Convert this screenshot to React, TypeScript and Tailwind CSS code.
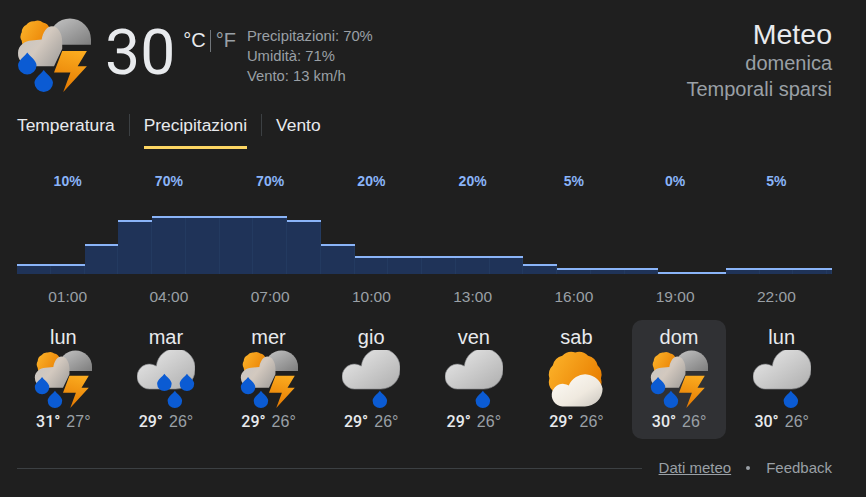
import type { ReactNode } from 'react'

const ORE = [
  { perc: '10%', ora: '01:00' },
  { perc: '70%', ora: '04:00' },
  { perc: '70%', ora: '07:00' },
  { perc: '20%', ora: '10:00' },
  { perc: '20%', ora: '13:00' },
  { perc: '5%', ora: '16:00' },
  { perc: '0%', ora: '19:00' },
  { perc: '5%', ora: '22:00' },
]

// altezza in px di ogni barra, una per ora (l'ultima e' tagliata dal bordo)
const BARRE = [10, 10, 30, 54, 58, 58, 58, 58, 54, 30, 18, 18, 18, 18, 18, 10, 6, 6, 6, 2, 2, 6, 6, 6, 6]

type Tipo = 'temporale' | 'pioggia' | 'goccia' | 'sole'

const GIORNI: { nome: string; tipo: Tipo; max: string; min: string; attivo?: boolean }[] = [
  { nome: 'lun', tipo: 'temporale', max: '31°', min: '27°' },
  { nome: 'mar', tipo: 'pioggia', max: '29°', min: '26°' },
  { nome: 'mer', tipo: 'temporale', max: '29°', min: '26°' },
  { nome: 'gio', tipo: 'goccia', max: '29°', min: '26°' },
  { nome: 'ven', tipo: 'goccia', max: '29°', min: '26°' },
  { nome: 'sab', tipo: 'sole', max: '29°', min: '26°' },
  { nome: 'dom', tipo: 'temporale', max: '30°', min: '26°', attivo: true },
  { nome: 'lun', tipo: 'goccia', max: '30°', min: '26°' },
]

// contorno a festoni del sole
function festoni(cx: number, cy: number, r: number, n: number) {
  let d = ''
  for (let i = 0; i <= n; i++) {
    const a = (i / n) * Math.PI * 2
    const x = (cx + r * Math.cos(a)).toFixed(2)
    const y = (cy + r * Math.sin(a)).toFixed(2)
    const arco = ((r * Math.PI) / n) * 1.9
    d += i === 0 ? `M${x} ${y}` : ` A${arco.toFixed(2)} ${arco.toFixed(2)} 0 0 1 ${x} ${y}`
  }
  return d + 'Z'
}

// y = centro della parte tonda, raggio 9
const Goccia = ({ x, y }: { x: number; y: number }) => (
  <path
    transform={`translate(${x} ${y})`}
    d="M0 -12.5 C2 -9 9 -5 9 0 A9 9 0 0 1 -9 0 C-9 -5 -2 -9 0 -12.5Z"
    fill="#0b5bd3"
  />
)

function IconaTemporale({ size }: { size: number }) {
  return (
    <svg width={size} height={size} viewBox="0 0 72 72">
      <path d="M31 26 L31 21 A20.5 20.5 0 0 1 72 21 L72 26Z" fill="url(#nuvolaScura)" />
      <path d={festoni(19, 18, 15, 11)} fill="url(#sole)" />
      <path
        d="M13 47 A12.5 12.5 0 0 1 1 34 C1 27 8 22 14 22 L24 21 C25 14 29 8 34 8 C40 8 44 15 44 23 L44 30 L36 47Z"
        fill="url(#nuvolaChiara)"
      />
      <path d="M44 32 L68 32 L59 47 L68 47 L45 72 L52 53 L36 53Z" fill="url(#fulmine)" />
      <Goccia x={10} y={46} />
      <Goccia x={26} y={63} />
    </svg>
  )
}

function IconaPioggia({ size, gocce }: { size: number; gocce: 1 | 3 }) {
  return (
    <svg width={size} height={size} viewBox="0 0 72 72">
      <path
        d="M15.5 48.5 A15.5 15.5 0 1 1 24 20 A24 24 0 0 1 72 24.5 A24 24 0 0 1 48 48.5Z"
        fill="url(#nuvolaGrigia)"
        stroke="#85878a"
        strokeWidth="0.8"
      />
      {gocce === 3 && (
        <>
          <Goccia x={34} y={42} />
          <Goccia x={62} y={42} />
        </>
      )}
      <Goccia x={47} y={63} />
    </svg>
  )
}

function IconaSole({ size }: { size: number }) {
  return (
    <svg width={size} height={size} viewBox="0 0 72 72">
      <path d={festoni(35, 35, 32, 12)} fill="url(#sole)" />
      <path
        d="M19 70 A14 14 0 1 1 27 44 A22 22 0 0 1 69 48 A22 22 0 0 1 47 70Z"
        fill="url(#nuvolaBianca)"
      />
    </svg>
  )
}

function Icona({ tipo, size }: { tipo: Tipo; size: number }) {
  if (tipo === 'temporale') return <IconaTemporale size={size} />
  if (tipo === 'pioggia') return <IconaPioggia size={size} gocce={3} />
  if (tipo === 'goccia') return <IconaPioggia size={size} gocce={1} />
  return <IconaSole size={size} />
}

function Gradienti() {
  return (
    <svg width="0" height="0" className="absolute">
      <defs>
        <linearGradient id="nuvolaScura" x1="0" y1="0" x2="1" y2="1">
          <stop offset="0" stopColor="#c6c6c6" />
          <stop offset="1" stopColor="#7d7d7d" />
        </linearGradient>
        <linearGradient id="nuvolaChiara" x1="0" y1="0" x2="1" y2="0.7">
          <stop offset="0" stopColor="#c4c4c4" />
          <stop offset="0.55" stopColor="#d3c9bf" />
          <stop offset="1" stopColor="#aaa6a2" />
        </linearGradient>
        <linearGradient id="nuvolaGrigia" x1="0" y1="0" x2="1" y2="1">
          <stop offset="0" stopColor="#ececec" />
          <stop offset="1" stopColor="#adadad" />
        </linearGradient>
        <linearGradient id="nuvolaBianca" x1="0" y1="0" x2="1" y2="1">
          <stop offset="0" stopColor="#fffdf8" />
          <stop offset="0.6" stopColor="#efe9df" />
          <stop offset="1" stopColor="#c9c5be" />
        </linearGradient>
        <linearGradient id="sole" x1="0" y1="0" x2="1" y2="0.6">
          <stop offset="0" stopColor="#fdb62c" />
          <stop offset="1" stopColor="#e87d00" />
        </linearGradient>
        <linearGradient id="fulmine" x1="0.6" y1="0" x2="0.4" y2="1">
          <stop offset="0" stopColor="#fbab1f" />
          <stop offset="1" stopColor="#e47800" />
        </linearGradient>
      </defs>
    </svg>
  )
}

function Tab({ children, attivo }: { children: ReactNode; attivo?: boolean }) {
  return (
    <div className="relative flex h-[22px] items-center border-r border-[#3c4043] px-[14px] pt-px text-[17.4px] text-[#e8eaed] first:pl-0 last:border-r-0">
      {children}
      {attivo && <div className="absolute left-[14px] right-[14px] top-[32px] h-[3px] bg-[#fdd663]" />}
    </div>
  )
}

export default function App() {
  return (
    <div className="relative h-[497px] w-[866px] overflow-hidden bg-[#1f1f1f] pl-[17px] pr-[34px] pt-[18px] font-['Liberation_Sans',Arial,sans-serif]">
      <Gradienti />

      {/* Intestazione */}
      <div className="flex h-[74px] items-start justify-between">
        <div className="flex">
          <Icona tipo="temporale" size={74} />
          <div className="ml-[14px] mt-[4px] font-['Roboto',sans-serif] text-[62.5px] leading-[62px] text-[#e8eaed]">30</div>
          <div className="ml-[8px] mt-[8px] flex h-[24px] items-start text-[20px] leading-[28px]">
            <span className="text-[#e8eaed]">°C</span>
            <span className="ml-[4px] mr-[5px] mt-[4px] h-[22px] w-px bg-[#70757a]" />
            <span className="text-[#9aa0a6]">°F</span>
          </div>
          <div className="ml-[11px] mt-[8px] text-[14.8px] leading-[20px] text-[#9aa0a6]">
            <div>Precipitazioni: 70%</div>
            <div>Umidità: 71%</div>
            <div>Vento: 13 km/h</div>
          </div>
        </div>
        <div className="text-right">
          <div className="text-[28.5px] leading-[32px] text-[#e8eaed]">Meteo</div>
          <div className="text-[20px] leading-[26px] text-[#9aa0a6]">domenica</div>
          <div className="text-[20px] leading-[26px] text-[#9aa0a6]">Temporali sparsi</div>
        </div>
      </div>

      {/* Schede */}
      <div className="mt-[22px] flex">
        <Tab>Temperatura</Tab>
        <Tab attivo>Precipitazioni</Tab>
        <Tab>Vento</Tab>
      </div>

      {/* Grafico */}
      <div className="mt-[37px] grid w-[810px] grid-cols-8 text-center text-[14px] font-bold leading-[16px] text-[#8ab4f8]">
        {ORE.map(o => (
          <div key={o.ora}>{o.perc}</div>
        ))}
      </div>
      <div className="mt-[27px] flex h-[58px] items-end">
        {BARRE.map((h, i) => (
          <div
            key={i}
            className="w-[33.75px] shrink-0 border-t-2 border-[#8ab4f8] bg-[#1f3358] shadow-[inset_-1px_0_0_#233a60] last:w-auto last:flex-1"
            style={{ height: h }}
          />
        ))}
      </div>
      <div className="mt-[15px] grid w-[810px] grid-cols-8 text-center text-[15.5px] leading-[16px] text-[#9aa0a6]">
        {ORE.map(o => (
          <div key={o.ora}>{o.ora}</div>
        ))}
      </div>

      {/* Giorni */}
      <div className="-ml-[5px] mt-[15px] grid w-[821px] grid-cols-8">
        {GIORNI.map((g, i) => (
          <div key={i} className="flex justify-center">
            <div className={`flex h-[119px] w-[94px] flex-col items-center rounded-[10px] pt-[6px] ${g.attivo ? 'bg-[#303134]' : ''}`}>
              <div className="text-[20px] leading-[22px] text-[#e8eaed]">{g.nome}</div>
              <div className="mt-[2px]">
                <Icona tipo={g.tipo} size={58} />
              </div>
              <div className="mt-[4px] flex gap-[6px] text-[16px] leading-[20px]">
                <span className="font-['Roboto',sans-serif] font-medium text-[#e8eaed]">{g.max}</span>
                <span className="text-[#9aa0a6]">{g.min}</span>
              </div>
            </div>
          </div>
        ))}
      </div>

      {/* Piede */}
      <div className="mt-[19px] flex items-center text-[15px] leading-[20px] text-[#9aa0a6]">
        <div className="h-px flex-1 bg-[#3c4043]" />
        <span className="ml-[17px] underline">Dati meteo</span>
        <span className="ml-[15px] mr-[16px] h-1 w-1 rounded-full bg-[#9aa0a6]" />
        <span>Feedback</span>
      </div>
    </div>
  )
}
